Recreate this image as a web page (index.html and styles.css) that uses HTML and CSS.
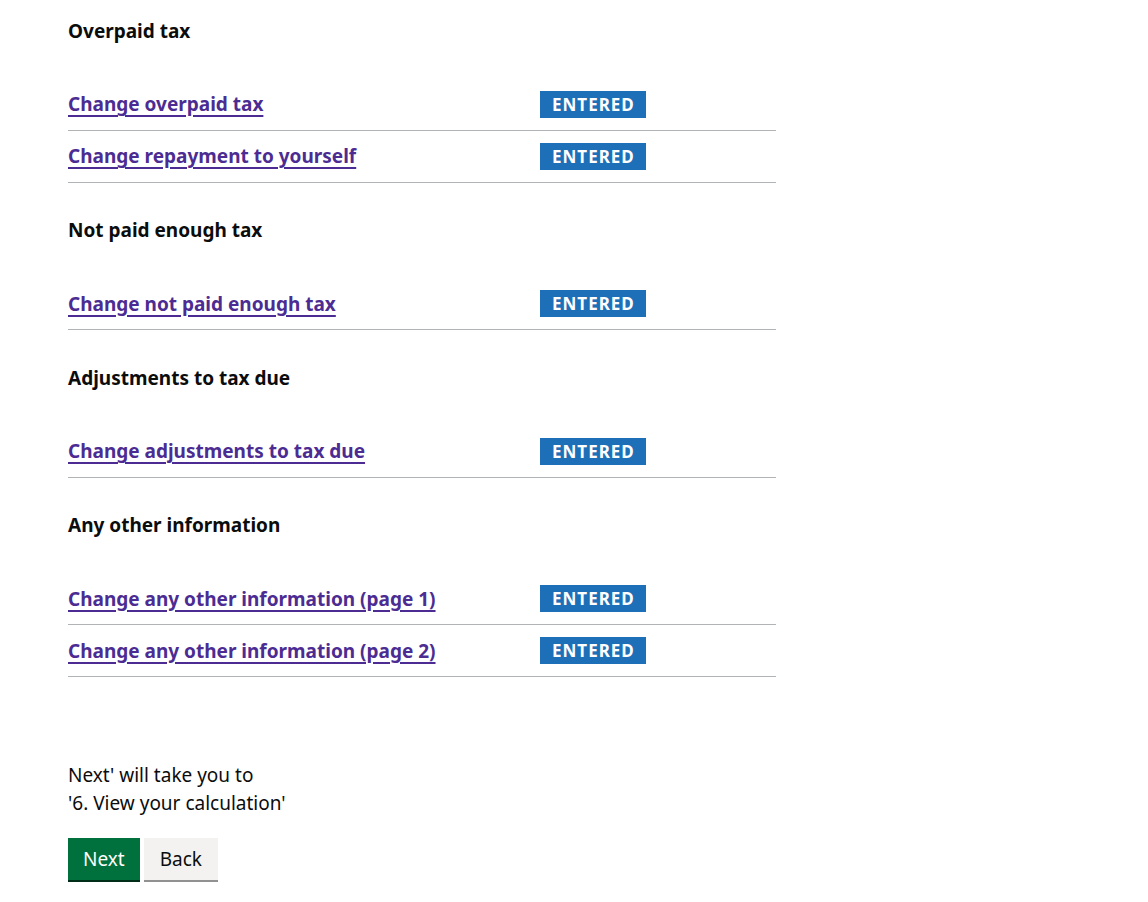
FILE: index.html
```html
<!DOCTYPE html>
<html lang="en">
<head>
    <meta charset="UTF-8">
    <title>Check your answers</title>
    <link rel="stylesheet" href="styles.css">
</head>
<body>
    <div class="page">

        <h2 class="section-title">Overpaid tax</h2>
        <ul class="task-list">
            <li class="task-row">
                <a href="#" class="task-link">Change overpaid tax</a>
                <span class="tag">Entered</span>
            </li>
            <li class="task-row">
                <a href="#" class="task-link">Change repayment to yourself</a>
                <span class="tag">Entered</span>
            </li>
        </ul>

        <h2 class="section-title">Not paid enough tax</h2>
        <ul class="task-list">
            <li class="task-row">
                <a href="#" class="task-link">Change not paid enough tax</a>
                <span class="tag">Entered</span>
            </li>
        </ul>

        <h2 class="section-title">Adjustments to tax due</h2>
        <ul class="task-list">
            <li class="task-row">
                <a href="#" class="task-link">Change adjustments to tax due</a>
                <span class="tag">Entered</span>
            </li>
        </ul>

        <h2 class="section-title">Any other information</h2>
        <ul class="task-list">
            <li class="task-row">
                <a href="#" class="task-link">Change any other information (page 1)</a>
                <span class="tag">Entered</span>
            </li>
            <li class="task-row">
                <a href="#" class="task-link">Change any other information (page 2)</a>
                <span class="tag">Entered</span>
            </li>
        </ul>

        <p class="next-hint">Next' will take you to<br>'6. View your calculation'</p>

        <div class="button-group">
            <button class="btn btn-primary">Next</button>
            <button class="btn btn-secondary">Back</button>
        </div>
    </div>
</body>
</html>
```

FILE: styles.css
```css
body {
    font-family: "Noto Sans", Arial, sans-serif;
    color: #0b0c0c;
    background-color: #fff;
    margin: 0;
    padding: 0;
}

.page {
    padding: 18.5px 0 20px 68px;
    width: 708px;
}

/* Section headings */
.section-title {
    font-size: 19px;
    line-height: 25px;
    font-weight: 700;
    margin: 35.5px 0 35px 0;
}

.section-title:first-child {
    margin-top: 0;
}

/* Task rows */
.task-list {
    list-style: none;
    margin: 0;
    padding: 0;
}

.task-row {
    display: grid;
    grid-template-columns: 472px auto;
    align-items: center;
    height: 51px;
    border-bottom: 1px solid #b1b4b6;
}

.task-link {
    font-size: 19px;
    font-weight: 700;
    color: #4c2c92;
    text-decoration: underline;
    text-decoration-thickness: 2px;
    text-underline-offset: 4px;
    justify-self: start;
}

.tag {
    justify-self: start;
    display: inline-block;
    background-color: #1d70b8;
    color: #fff;
    font-size: 17px;
    font-weight: 700;
    line-height: 20px;
    letter-spacing: 1px;
    text-transform: uppercase;
    padding: 4px 11px 3px 12px;
}

/* Footer text and buttons */
.next-hint {
    font-size: 19px;
    line-height: 28px;
    margin: 84px 0 21px 0;
}

.button-group {
    display: flex;
    gap: 4px;
}

.btn {
    font-family: inherit;
    font-size: 19px;
    line-height: 24px;
    border: none;
    border-radius: 0;
    padding: 9px 15px 9px 15px;
    cursor: pointer;
}

.btn-primary {
    background-color: #00703c;
    color: #fff;
    box-shadow: 0 2px 0 #002d18;
}

.btn-secondary {
    background-color: #f3f2f1;
    color: #0b0c0c;
    box-shadow: 0 2px 0 #929191;
    padding: 9px 16px 9px 16px;
}
```
